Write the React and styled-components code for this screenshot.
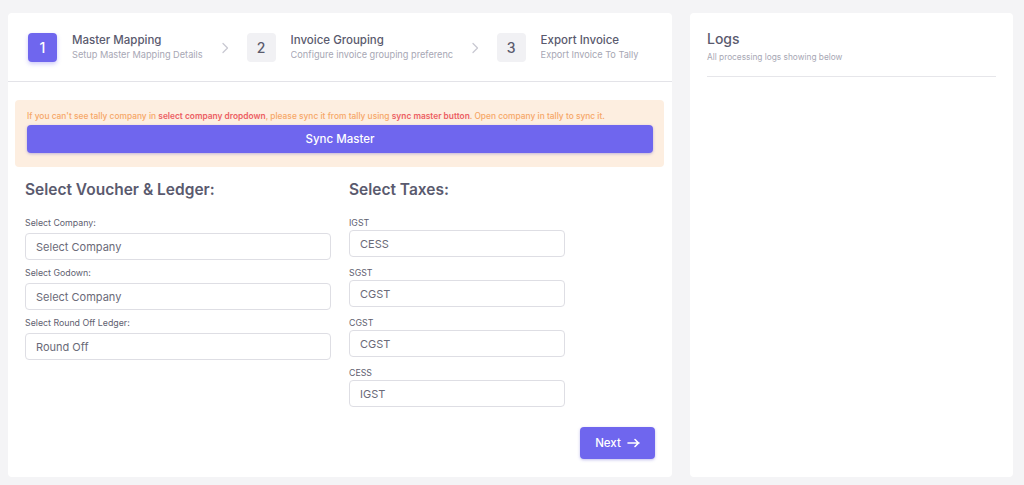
import { Fragment } from 'react'
import styled, { createGlobalStyle } from 'styled-components'

const GlobalStyle = createGlobalStyle`
    * { box-sizing: border-box; }
    body {
        margin: 0;
        background: #f4f4f6;
        font-family: Inter, "Liberation Sans", sans-serif;
    }
`

const Page = styled.div`
    display: flex;
    gap: 18px;
    padding: 13px 11px 8px 8px;
    height: 485px;
`
const Card = styled.div`
    background: #ffffff;
    border-radius: 4px;
    display: flex;
    flex-direction: column;
    width: ${p => p.$width};
    flex-shrink: 0;
`
const Stepper = styled.div`
    display: flex;
    align-items: center;
    gap: 14px;
    padding: 20px 20px 19px;
    border-bottom: 1px solid #e3e3e8;
`
const Step = styled.div`
    display: flex;
    align-items: center;
    gap: 15px;
`
const StepNum = styled.div`
    width: 29px;
    height: 29px;
    border-radius: 4px;
    display: flex;
    align-items: center;
    justify-content: center;
    font-size: 14px;
    font-weight: 500;
    background: ${p => (p.$active ? '#6f66ee' : '#f1f1f4')};
    color: ${p => (p.$active ? '#ffffff' : '#5b5b6e')};
    box-shadow: ${p => (p.$active ? '0 2px 4px rgba(111,102,238,0.35)' : 'none')};
`
const StepText = styled.div`
    display: flex;
    flex-direction: column;
    gap: 2px;
    max-width: ${p => p.$max || 'none'};
    overflow: hidden;
    white-space: nowrap;
    margin-top: -2px;
`
const StepTitle = styled.div`
    font-size: 11.5px;
    font-weight: 500;
    color: #5a5a6e;
`
const StepSub = styled.div`
    font-size: 9.2px;
    color: #a7a7b4;
`
const Chevron = styled.svg`
    width: 16px;
    height: 16px;
    flex-shrink: 0;
`
const Body = styled.div`
    padding: 18px 8px 0 7px;
    display: flex;
    flex-direction: column;
`
const Alert = styled.div`
    background: #fdeee0;
    border-radius: 4px;
    padding: 11px 11px 14px 12px;
    display: flex;
    flex-direction: column;
    gap: 4px;
`
const AlertText = styled.div`
    font-size: 8.4px;
    font-weight: 500;
    color: #f6a767;
    white-space: nowrap;
    b { color: #ec5f63; font-weight: 600; }
`
const PrimaryButton = styled.button`
    font-family: inherit;
    border: none;
    border-radius: 4px;
    background: #6f66ee;
    color: #ffffff;
    font-size: 11.5px;
    font-weight: 500;
    height: ${p => p.$height};
    width: ${p => p.$width || 'auto'};
    display: flex;
    align-items: center;
    justify-content: center;
    gap: 6px;
    box-shadow: 0 1px 3px rgba(80, 70, 200, 0.35);
    cursor: pointer;
`
const Columns = styled.div`
    display: grid;
    grid-template-columns: 306px 216px;
    column-gap: 18px;
    padding: 12px 10px 0;
`
const Column = styled.div`
    display: flex;
    flex-direction: column;
`
const Heading = styled.h2`
    margin: 0 0 16px;
    font-size: 15.5px;
    font-weight: 600;
    color: #5a5a6e;
    line-height: 22px;
`
const Field = styled.div`
    display: flex;
    flex-direction: column;
    gap: ${p => p.$gap};
    margin-bottom: ${p => p.$mb};
`
const Label = styled.label`
    font-size: 8.8px;
    color: #606070;
    line-height: 11px;
`
const Input = styled.div`
    height: 27px;
    border: 1px solid #dedee4;
    border-radius: 4px;
    padding: 0 10px;
    display: flex;
    align-items: center;
    font-size: 11px;
    color: #6a6a78;
`
const Footer = styled.div`
    display: flex;
    justify-content: flex-end;
    padding: 10px 9px 0;
`
const LogsHead = styled.div`
    margin: 17px 17px 0;
    padding-bottom: 14px;
    border-bottom: 1px solid #e6e6ea;
`
const LogsTitle = styled.div`
    font-size: 14px;
    font-weight: 500;
    color: #5a5a6e;
    line-height: 18px;
`
const LogsSub = styled.div`
    font-size: 8.3px;
    color: #a7a7b4;
    margin-top: 4px;
`

const ChevronIcon = () => (
    <Chevron viewBox="0 0 16 16" fill="none" stroke="#c9c9d2" strokeWidth="1.3" strokeLinecap="round" strokeLinejoin="round">
        <path d="M6 3.5l4.5 4.5L6 12.5" />
    </Chevron>
)

const steps = [
    { n: 1, title: 'Master Mapping', sub: 'Setup Master Mapping Details', active: true },
    { n: 2, title: 'Invoice Grouping', sub: 'Configure invoice grouping preferences', max: '162px' },
    { n: 3, title: 'Export Invoice', sub: 'Export Invoice To Tally' },
]

const leftFields = [
    { label: 'Select Company:', value: 'Select Company' },
    { label: 'Select Godown:', value: 'Select Company' },
    { label: 'Select Round Off Ledger:', value: 'Round Off' },
]
const taxFields = [
    { label: 'IGST', value: 'CESS' },
    { label: 'SGST', value: 'CGST' },
    { label: 'CGST', value: 'CGST' },
    { label: 'CESS', value: 'IGST' },
]

const App = () => {
    return (
        <>
            <GlobalStyle />
            <Page>
                <Card $width="664px">
                    <Stepper>
                        {steps.map((s, i) => (
                            <Fragment key={s.n}>
                                <Step>
                                    <StepNum $active={s.active}>{s.n}</StepNum>
                                    <StepText $max={s.max}>
                                        <StepTitle>{s.title}</StepTitle>
                                        <StepSub>{s.sub}</StepSub>
                                    </StepText>
                                </Step>
                                {i < steps.length - 1 && <ChevronIcon />}
                            </Fragment>
                        ))}
                    </Stepper>
                    <Body>
                        <Alert>
                            <AlertText>
                                If you can't see tally company in <b>select company dropdown</b>, please sync it from tally using <b>sync master button</b>. Open company in tally to sync it.
                            </AlertText>
                            <PrimaryButton $height="28px" $width="100%">Sync Master</PrimaryButton>
                        </Alert>
                        <Columns>
                            <Column>
                                <Heading>Select Voucher &amp; Ledger:</Heading>
                                {leftFields.map(f => (
                                    <Field key={f.label} $gap="5px" $mb="7px">
                                        <Label>{f.label}</Label>
                                        <Input>{f.value}</Input>
                                    </Field>
                                ))}
                            </Column>
                            <Column>
                                <Heading>Select Taxes:</Heading>
                                {taxFields.map(f => (
                                    <Field key={f.label} $gap="2px" $mb="10px">
                                        <Label>{f.label}</Label>
                                        <Input>{f.value}</Input>
                                    </Field>
                                ))}
                            </Column>
                        </Columns>
                        <Footer>
                            <PrimaryButton $height="32px" $width="75px">
                                Next
                                <svg width="13" height="10" viewBox="0 0 13 10" fill="none" stroke="#fff" strokeWidth="1.6" strokeLinecap="round" strokeLinejoin="round">
                                    <path d="M1 5h11M8 1.5L11.5 5 8 8.5" />
                                </svg>
                            </PrimaryButton>
                        </Footer>
                    </Body>
                </Card>
                <Card $width="323px">
                    <LogsHead>
                        <LogsTitle>Logs</LogsTitle>
                        <LogsSub>All processing logs showing below</LogsSub>
                    </LogsHead>
                </Card>
            </Page>
        </>
    )
}

export default App
